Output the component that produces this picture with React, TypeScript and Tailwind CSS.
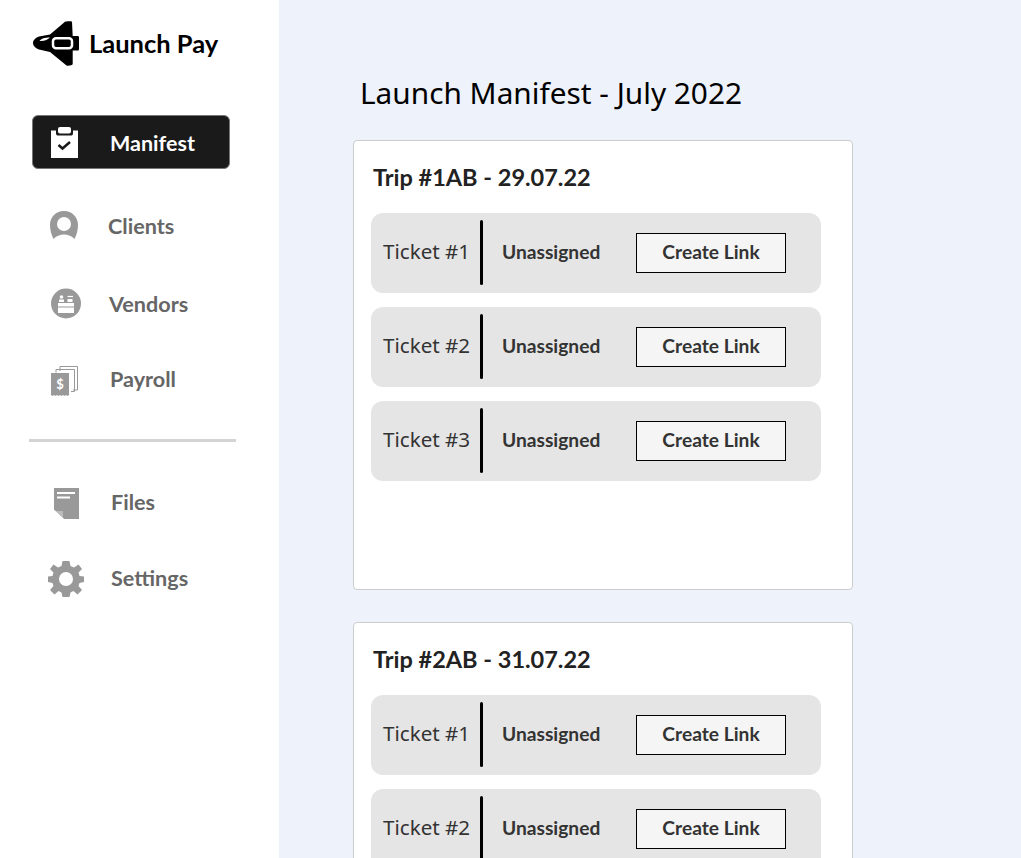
import React from 'react';

const boldFont = "font-['Lato','Liberation_Sans',sans-serif]";

const RocketLogo = () => (
  <svg viewBox="0 0 46 45" className="w-[46px] h-[45px] shrink-0">
    <path fill="#000" d="M0 22C0 19 3 16.500 6 15.500L17 13.500L32 0.800C33 0.200 38 0 39 0.800L39.700 15H44.500C45.500 15 46 15.500 46 16.500V28C46 29 45.500 29.500 44.500 29.500H39.700L39.700 43C39.700 44.500 35 45 33.500 44.500L17 31L6 28.500C3 27.500 0 25 0 22Z" />
    <path fill="#fff" d="M6.500 20C8 17.500 12 16.500 17 16.500C15 18.500 11 20.500 6.500 20Z" />
    <rect x="20" y="17.300" width="19" height="10" rx="3" fill="none" stroke="#fff" strokeWidth="2.500" />
  </svg>
);

const ClipboardIcon = () => (
  <svg viewBox="0 0 27 31" className="w-[27px] h-[31px]">
    <path fill="#fff" d="M0 3.500H5V6.500C5 8 6 8.500 7 8.500H20C21 8.500 22 8 22 6.500V3.500H27V31H0Z" />
    <rect x="7" y="0" width="13" height="6.500" rx="2" fill="#fff" />
    <path fill="none" stroke="#1a1a1a" strokeWidth="2.500" d="M7.500 18L11.500 21.500L19 15" />
  </svg>
);

const ClientIcon = () => (
  <svg viewBox="0 0 28 29" className="w-[28px] h-[29px]">
    <path fill="#999" d="M14 0C22 0 28 6 28 14C28 19 26.500 24 24.500 28C22 25 18 23.500 14 23.500C10 23.500 6 25 3.500 28C1.500 24 0 19 0 14C0 6 6 0 14 0Z" />
    <circle cx="14" cy="13" r="7" fill="#fff" />
  </svg>
);

const VendorIcon = () => (
  <svg viewBox="0 0 30 31" className="w-[30px] h-[31px]">
    <circle cx="15" cy="15.500" r="15" fill="#999" />
    <rect x="7" y="15" width="16" height="10" fill="#fff" />
    <path stroke="#999" strokeWidth="1" d="M7 19H23" />
    <circle cx="10.500" cy="9" r="1.800" fill="#fff" />
    <rect x="8" y="11.500" width="5" height="2.500" fill="#fff" />
    <path stroke="#fff" strokeWidth="1.200" d="M16.500 8.500H22" />
    <rect x="16.500" y="11" width="5" height="3" fill="#fff" />
  </svg>
);

const PayrollIcon = () => (
  <svg viewBox="0 0 27 30" className="w-[27px] h-[30px]">
    <path fill="none" stroke="#999" strokeWidth="1" d="M9 5V0.500H26.500V24H22" />
    <path fill="none" stroke="#999" strokeWidth="1" d="M5 6.500V3.500H23.500V25.500H20" />
    <path fill="#999" d="M0 7H18V29L16.500 30L15 29L13.500 30L12 29L10.500 30L9 29L7.500 30L6 29L4.500 30L3 29L1.500 30L0 29Z" />
    <text x="9" y="23" textAnchor="middle" fontSize="13" fontWeight="700" fill="#fff" fontFamily="Lato, sans-serif">$</text>
  </svg>
);

const FileIcon = () => (
  <svg viewBox="0 0 25 31" className="w-[25px] h-[31px]">
    <path fill="#999" d="M0 0H25V31H10L0 21.500Z" />
    <path fill="#fff" d="M3 4H21V6H3ZM3 8.500H16V10.500H3Z" />
    <path fill="#fff" d="M0 22.500L10 31H8.500L0 23.500Z" />
    <path fill="#fff" d="M1.500 23H9V29.500Z" opacity="0.350" />
  </svg>
);

const GearIcon = () => (
  <svg viewBox="0 0 36 36" className="w-[36px] h-[36px]">
    <path fill="#999" d="M14.500 0H21.500L22.500 5L26 6.500L30.500 3.500L34 8L30.500 11.500L31.500 15L36 15.500V21L31.500 22L30.500 25L34 29L29.500 33.500L25.500 30L22.500 31.500L21.500 36H14.500L13.500 31.500L10.500 30L6.500 33.500L2 29L5.500 25L4.500 22L0 21V15.500L4.500 15L5.500 11.500L2 8L5.500 3.500L10 6.500L13.500 5Z" />
    <circle cx="18" cy="18" r="7" fill="#fff" />
  </svg>
);

const TicketRow = ({ name }: { name: string }) => (
  <div className="flex items-center w-[450px] h-20 bg-[#e5e5e5] rounded-xl">
    <span className="w-[109px] pl-3 pb-[3px] text-[20.600px] text-[#333] whitespace-nowrap">{name}</span>
    <div className="w-[3px] h-[65px] mb-[2px] bg-black rounded-sm" />
    <span className={`w-[153px] pl-[19px] pb-[2px] text-[19.200px] font-bold text-[#333] ${boldFont}`}>Unassigned</span>
    <button className={`w-[150px] h-10 pb-[2px] bg-[#f5f5f5] border border-black text-[19.200px] font-bold text-[#333] ${boldFont}`}>
      Create Link
    </button>
  </div>
);

const TripCard = ({ title, tickets }: { title: string; tickets: string[] }) => (
  <section className="w-[500px] h-[450px] shrink-0 bg-white border border-[#ccc] rounded pl-[17px] pt-[19px]">
    <h2 className={`pl-[2px] h-9 flex items-center text-[23.500px] font-bold text-[#222] ${boldFont}`}>{title}</h2>
    <div className="mt-[17px] flex flex-col gap-[14px]">
      {tickets.map(t => (
        <TicketRow key={t} name={t} />
      ))}
    </div>
  </section>
);

const labelClass = `text-[21.600px] font-bold text-[#666] ${boldFont}`;

export default function App() {
  return (
    <div className="flex w-[1021px] h-[858px] overflow-hidden bg-[#eef2fa] font-['Noto_Sans',sans-serif]">
      {/* Sidebar */}
      <aside className="w-[279px] shrink-0 bg-white">
        <div className="flex items-center gap-[10px] pl-[33px] pt-[21px]">
          <RocketLogo />
          <span className={`text-[25.500px] font-bold text-black ${boldFont}`}>Launch Pay</span>
        </div>

        <div className="ml-8 mt-[49px] w-[198px] h-[54px] flex items-center pl-[18px] bg-[#1a1a1a] border border-[#777] rounded-md">
          <ClipboardIcon />
          <span className={`ml-8 pt-[2px] text-[21.500px] font-bold text-white ${boldFont}`}>Manifest</span>
        </div>

        <div className="flex items-center ml-[50px] mt-[42px] h-[29px]">
          <ClientIcon />
          <span className={`ml-[30px] pt-[2px] ${labelClass}`}>Clients</span>
        </div>
        <div className="flex items-center ml-[51px] mt-[48px] h-[31px]">
          <VendorIcon />
          <span className={`ml-[28px] pt-[1px] ${labelClass}`}>Vendors</span>
        </div>
        <div className="flex items-center ml-[51px] mt-[47px] h-[30px]">
          <PayrollIcon />
          <span className={`ml-[32px] pb-[3px] ${labelClass}`}>Payroll</span>
        </div>

        <div className="ml-[29px] mt-[43px] w-[207px] h-[3px] bg-[#d4d4d4]" />

        <div className="flex items-center ml-[54px] mt-[46px] h-[31px]">
          <FileIcon />
          <span className={`ml-[32px] pb-[2px] ${labelClass}`}>Files</span>
        </div>
        <div className="flex items-center ml-[48px] mt-[42px] h-[36px]">
          <GearIcon />
          <span className={`ml-[27px] pb-[2px] ${labelClass}`}>Settings</span>
        </div>
      </aside>

      {/* Main */}
      <main className="flex-1 pl-[74px] pt-[72px]">
        <h1 className="pl-[7px] h-[42px] flex items-center text-[29.800px] text-black whitespace-nowrap">Launch Manifest - July 2022</h1>
        <div className="mt-[26px] flex flex-col gap-8">
          <TripCard title="Trip #1AB - 29.07.22" tickets={['Ticket #1', 'Ticket #2', 'Ticket #3']} />
          <TripCard title="Trip #2AB - 31.07.22" tickets={['Ticket #1', 'Ticket #2']} />
        </div>
      </main>
    </div>
  );
}
